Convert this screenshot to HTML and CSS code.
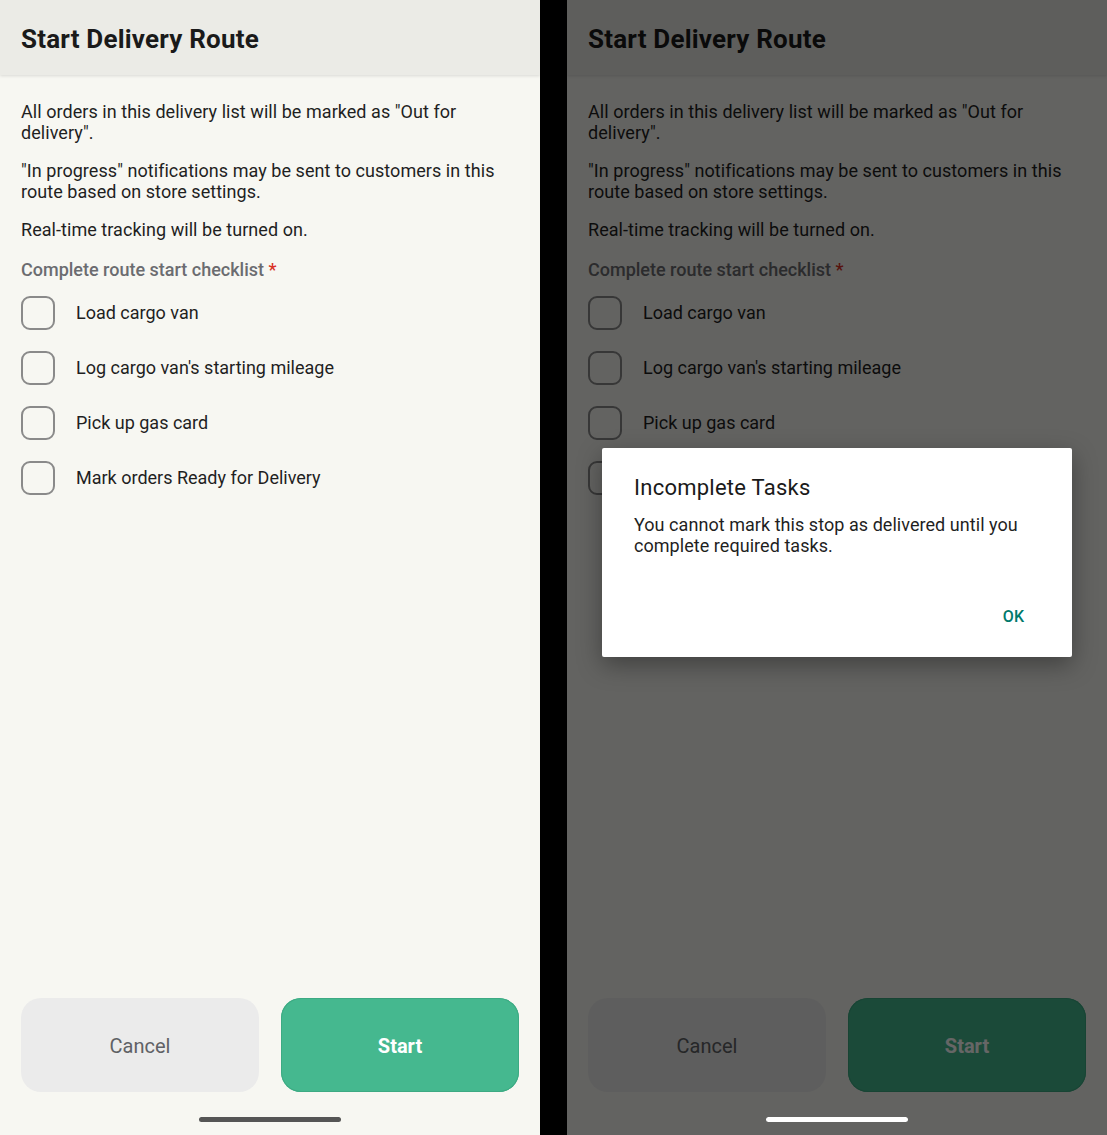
FILE: index.html
```html
<!DOCTYPE html>
<html lang="en">
<head>
    <meta charset="UTF-8">
    <meta name="viewport" content="width=device-width, initial-scale=1.0">
    <title>Start Delivery Route</title>
    <link rel="stylesheet" href="styles.css">
</head>
<body>
    <div class="screen">
        <div class="header">
            <h1>Start Delivery Route</h1>
        </div>
        <div class="content">
            <p>All orders in this delivery list will be marked as "Out for delivery".</p>
            <p>"In progress" notifications may be sent to customers in this route based on store settings.</p>
            <p>Real-time tracking will be turned on.</p>
            <div class="checklist-title">Complete route start checklist <span class="req">*</span></div>
            <div class="checklist">
                <label class="check-row"><span class="box"></span>Load cargo van</label>
                <label class="check-row"><span class="box"></span>Log cargo van's starting mileage</label>
                <label class="check-row"><span class="box"></span>Pick up gas card</label>
                <label class="check-row"><span class="box"></span>Mark orders Ready for Delivery</label>
            </div>
        </div>
        <div class="actions">
            <button class="btn cancel">Cancel</button>
            <button class="btn start">Start</button>
        </div>
        <div class="home-bar"></div>
    </div>

    <div class="screen">
        <div class="header">
            <h1>Start Delivery Route</h1>
        </div>
        <div class="content">
            <p>All orders in this delivery list will be marked as "Out for delivery".</p>
            <p>"In progress" notifications may be sent to customers in this route based on store settings.</p>
            <p>Real-time tracking will be turned on.</p>
            <div class="checklist-title">Complete route start checklist <span class="req">*</span></div>
            <div class="checklist">
                <label class="check-row"><span class="box"></span>Load cargo van</label>
                <label class="check-row"><span class="box"></span>Log cargo van's starting mileage</label>
                <label class="check-row"><span class="box"></span>Pick up gas card</label>
                <label class="check-row"><span class="box"></span>Mark orders Ready for Delivery</label>
            </div>
        </div>
        <div class="actions">
            <button class="btn cancel">Cancel</button>
            <button class="btn start">Start</button>
        </div>
        <div class="home-bar"></div>

        <div class="scrim"></div>
        <div class="dialog">
            <h2>Incomplete Tasks</h2>
            <p>You cannot mark this stop as delivered until you complete required tasks.</p>
            <div class="dialog-actions">
                <button class="ok">OK</button>
            </div>
        </div>
        <div class="home-bar light"></div>
    </div>
</body>
</html>
```

FILE: styles.css
```css
body {
    margin: 0;
    background: #000;
    display: flex;
    gap: 27px;
    font-family: Roboto, "Noto Sans", sans-serif;
    color: #1f1f1f;
}
.screen {
    position: relative;
    width: 540px;
    height: 1135px;
    background: #f7f7f2;
    display: flex;
    flex-direction: column;
    overflow: hidden;
}
.header {
    height: 75px;
    padding: 2px 21px 0;
    box-sizing: border-box;
    display: flex;
    align-items: center;
    background: #ebebe6;
    box-shadow: 0 1px 3px rgba(0, 0, 0, 0.12);
}
.header h1 {
    margin: 0;
    font-size: 26px;
    font-weight: 700;
    letter-spacing: 0.2px;
    color: #1a1a1a;
}
.content {
    padding: 26px 21px 0;
}
.content p {
    margin: 0 0 17px;
    font-size: 18px;
    line-height: 21px;
    letter-spacing: 0.05px;
}
.checklist-title {
    margin-top: 19px;
    font-size: 18px;
    line-height: 21px;
    font-weight: 500;
    color: #6b6c70;
}
.req {
    color: #d93025;
}
.checklist {
    margin-top: 5px;
}
.check-row {
    height: 55px;
    display: flex;
    align-items: center;
    gap: 21px;
    font-size: 18px;
}
.box {
    width: 34px;
    height: 34px;
    box-sizing: border-box;
    border: 2px solid #8a8a8a;
    border-radius: 9px;
}
.actions {
    margin-top: auto;
    display: flex;
    gap: 22px;
    padding: 0 21px;
}
.btn {
    flex: 1;
    height: 94px;
    padding-top: 3px;
    border: none;
    border-radius: 20px;
    font-family: inherit;
    font-size: 20px;
}
.cancel {
    background: #ebebeb;
    color: #5f6165;
}
.start {
    background: #45b88f;
    color: #fff;
    font-weight: 700;
    box-shadow: inset 0 0 0 1px #3daa83;
}
.home-bar {
    width: 142px;
    height: 5px;
    border-radius: 3px;
    background: #555;
    margin: 25px auto 13px;
}
.home-bar.light {
    position: absolute;
    left: 199px;
    bottom: 0;
    margin: 0 0 13px;
    background: #fff;
}
.scrim {
    position: absolute;
    inset: 0;
    background: rgba(0, 0, 0, 0.6);
}
.dialog {
    position: absolute;
    left: 35px;
    top: 448px;
    width: 470px;
    height: 209px;
    box-sizing: border-box;
    padding: 27px 48px 30px 32px;
    background: #fff;
    border-radius: 2px;
    box-shadow: 0 8px 24px rgba(0, 0, 0, 0.35);
    display: flex;
    flex-direction: column;
}
.dialog h2 {
    margin: 0;
    font-size: 22px;
    line-height: 26px;
    font-weight: 400;
    letter-spacing: 0.25px;
    color: #1a1a1a;
}
.dialog p {
    margin: 13px 0 0;
    font-size: 18px;
    line-height: 21px;
    letter-spacing: 0.05px;
}
.dialog-actions {
    margin-top: auto;
    display: flex;
    justify-content: flex-end;
}
.ok {
    border: none;
    background: none;
    padding: 0;
    font-family: inherit;
    font-size: 16px;
    line-height: 20px;
    font-weight: 500;
    color: #00796b;
}
```
